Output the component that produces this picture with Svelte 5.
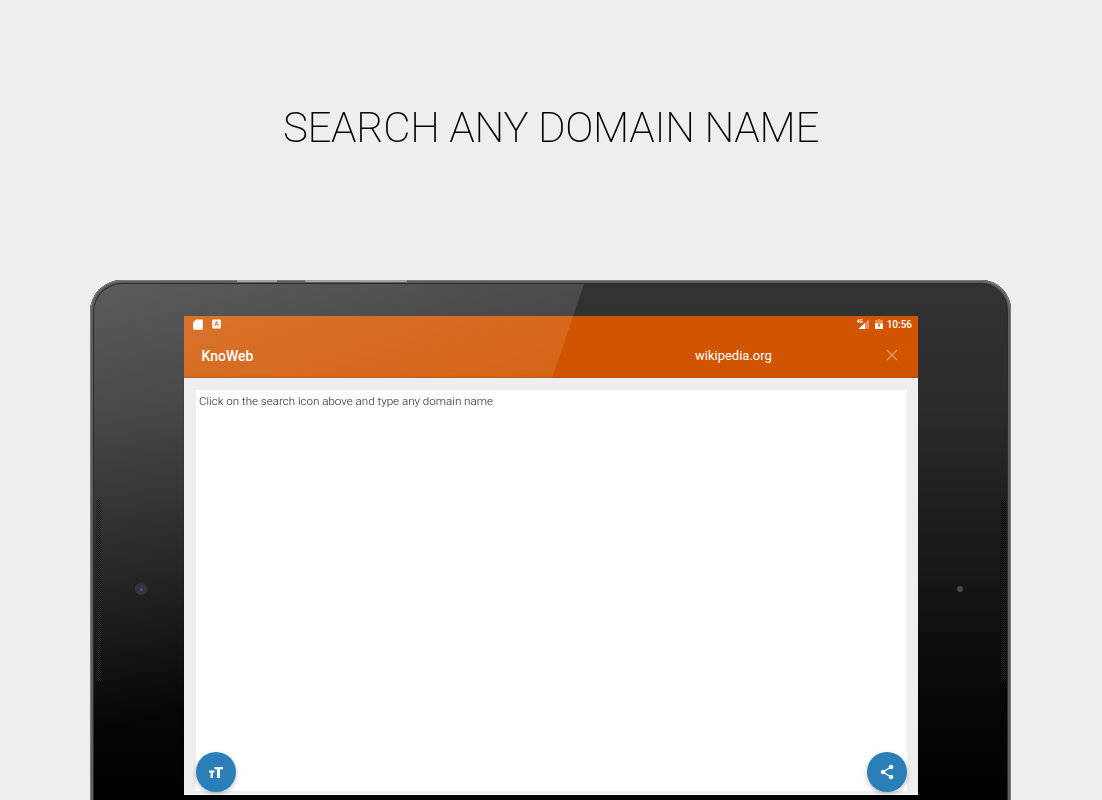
<script>
  const title = 'SEARCH ANY DOMAIN NAME';
  const hint = 'Click on the search icon above and type any domain name';
</script>

<div class="page">
  <h1>{title}</h1>
  <div class="device">
    <div class="glare"></div>
    <span class="btn btn-a"></span>
    <span class="btn btn-b"></span>
    <span class="grille grille-l"></span>
    <span class="grille grille-r"></span>
    <span class="camera"><i></i></span>
    <span class="sensor"></span>
    <div class="screen">
      <header class="bar">
        <div class="status">
          <svg class="si" viewBox="0 0 10 11" width="10" height="11"><path d="M3 .5h6a.8.8 0 0 1 .8.8v8.600a.8.8 0 0 1-.8.8H1a.8.8 0 0 1-.8-.8V3.300z" fill="#fff"/></svg>
          <svg class="si second" viewBox="0 0 9 10" width="9" height="10"><path fill-rule="evenodd" d="M1 .5h7a.8.8 0 0 1 .8.8v7.400a.8.8 0 0 1-.8.8H1a.8.8 0 0 1-.8-.8V1.300A.8.8 0 0 1 1 .5zM4 2.200 2.300 7h1l.3-1h1.800l.3 1h1L5 2.200zM4.500 3.700 5.100 5.200H3.900z" fill="#fff"/></svg>
          <span class="grow"></span>
          <span class="net">
            <svg viewBox="0 0 12 10" width="12" height="10"><path d="M12 0v10H1.500z" fill="#fff" opacity=".35"/><path d="M8 4v6H1.500z" fill="#fff"/></svg>
            <b>4G</b>
          </span>
          <svg class="batt" viewBox="0 0 8 10" width="8" height="10"><path d="M2.800 0h2.400v1H8v9H0V1h2.800z" fill="#fff" opacity=".35"/><path d="M0 4.500h8V10H0z" fill="#fff"/><path d="M4.300 3.500 2.500 6.800h1.200V9l1.800-3.300H4.300z" fill="#d15500"/></svg>
          <span class="time">10:56</span>
        </div>
        <div class="tools">
          <span class="brand">KnoWeb</span>
          <span class="domain">wikipedia.org</span>
          <svg class="close" viewBox="0 0 12 12" width="12" height="12"><path d="M1 1l10 10M11 1 1 11" stroke="#fff" stroke-opacity=".4" stroke-width="1.400" fill="none"/></svg>
        </div>
      </header>
      <main class="body">
        <div class="card"><p>{hint}</p></div>
        <button class="fab fab-l" aria-label="Text size">
          <svg viewBox="0 0 14 11" width="14" height="11"><path d="M5.500 0H14v2.200h-3V11H8V2.200H5.500zM0 3.500h5.500v2H3.900V11H1.600V5.500H0z" fill="#fff"/></svg>
        </button>
        <button class="fab fab-r" aria-label="Share">
          <svg viewBox="0 0 14 16" width="14" height="16"><path d="M11 3 3 8l8 5" stroke="#fff" stroke-width="1.400" fill="none"/><circle cx="11" cy="3" r="2.300" fill="#fff"/><circle cx="3" cy="8" r="2.300" fill="#fff"/><circle cx="11" cy="13" r="2.300" fill="#fff"/></svg>
        </button>
      </main>
    </div>
  </div>
</div>

<style>
  :global(body) { margin: 0; background: #eeeeee; }
  .page { height: 800px; overflow: hidden; background: #eeeeee; font-family: Roboto, "Liberation Sans", sans-serif; }
  h1 {
    margin: 0; padding-top: 102px; height: 52px; line-height: 52px; text-align: center;
    font-size: 42px; font-weight: 200; letter-spacing: -.3px; color: #000; white-space: nowrap;
    will-change: transform;
  }
  .device {
    position: relative; box-sizing: border-box; width: 921px; height: 560px; margin: 126px 0 0 90px;
    padding: 36px 93px 0 94px; border-radius: 32px 30px 0 0;
    background: linear-gradient(180deg, #333 0, #2c2c2c 120px, #161616 300px, #060606 430px, #000 520px);
    box-shadow: inset 0 0 0 1px #7c7c80, inset 0 0 0 3px #5e5e62, inset 0 0 0 4px #2b2b2e;
  }
  .glare {
    position: absolute; inset: 4px 0 0 4px; z-index: 1; pointer-events: none; border-top-left-radius: 28px;
    clip-path: polygon(0 0, 490px 0, 340px 445px, 0 445px);
    background: linear-gradient(161deg, rgba(255,255,255,.2) 0, rgba(255,255,255,0) 430px);
  }
  .btn { position: absolute; top: 0; height: 2px; background: #a4a4a8; }
  .btn-a { left: 147px; width: 40px; }
  .btn-b { left: 215px; width: 102px; }
  .grille {
    position: absolute; top: 220px; width: 5px; height: 181px;
    background: repeating-conic-gradient(#050505 0 25%, #242424 0 50%) 0 0 / 2px 2px;
  }
  .grille-l { left: 6px; }
  .grille-r { right: 5px; }
  .camera {
    position: absolute; left: 45px; top: 303px; width: 12px; height: 12px; border-radius: 50%;
    background: #2a2a2c; display: flex; align-items: center; justify-content: center;
  }
  .camera i { width: 3px; height: 3px; background: #2f4f9a; border-radius: 50%; }
  .sensor { position: absolute; right: 48px; top: 306px; width: 6px; height: 6px; border-radius: 50%; background: #4a4a4a; }
  .screen { box-sizing: border-box; height: 479px; display: flex; flex-direction: column; }
  .bar { background: #d15500; height: 62px; flex: none; color: #fff; }
  .status { height: 16px; display: flex; align-items: center; padding: 0 6px 0 9px; }
  .si { display: block; }
  .second { margin-left: 9px; }
  .grow { flex: 1; }
  .net { position: relative; width: 12px; height: 10px; margin-right: 6px; }
  .net svg { display: block; }
  .net b { position: absolute; left: 0; top: -1px; font-size: 5px; line-height: 6px; font-weight: 700; }
  .batt { margin-right: 4px; }
  .time { font-size: 10px; font-weight: 500; line-height: 12px; padding-top: 1px; }
  .tools { box-sizing: border-box; height: 46px; padding: 1px 20px 0 17.500px; display: flex; align-items: center; }
  .brand { font-size: 14px; font-weight: 500; width: 493.500px; }
  .domain { font-size: 13px; width: 191px; }
  .close { margin-top: -1px; }
  .body {
    position: relative; z-index: 2; flex: 1; background: #eeeeee; padding: 12px 11px 3px 12px;
    display: flex; border-bottom: 1px solid #fff; box-shadow: 0 -1px 2px rgba(0,0,0,.15);
  }
  .card { flex: 1; background: #fff; }
  .card p { margin: 0; padding: 4px 3px; font-size: 11.600px; line-height: 14px; font-weight: 300; color: #222; will-change: transform; }
  .fab {
    position: absolute; bottom: 2px; width: 40px; height: 40px; padding: 0; border: 0; border-radius: 50%;
    background: #2a7fba; display: flex; align-items: center; justify-content: center;
    box-shadow: 0 2px 5px rgba(0,0,0,.25);
  }
  .fab svg { display: block; }
  .fab-l { left: 12px; }
  .fab-r { right: 11px; }
</style>
